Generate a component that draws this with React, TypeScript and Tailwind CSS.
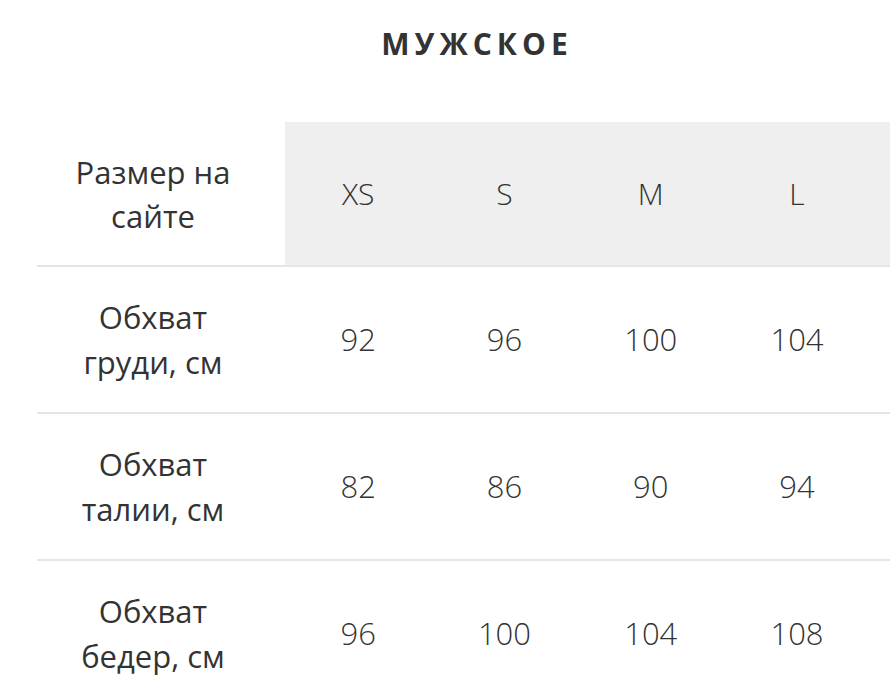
const sizes = ["XS", "S", "M", "L"];

const rows = [
  { label: ["Обхват", "груди, см"], values: ["92", "96", "100", "104"] },
  { label: ["Обхват", "талии, см"], values: ["82", "86", "90", "94"] },
  { label: ["Обхват", "бедер, см"], values: ["96", "100", "104", "108"] },
];

export default function App() {
  return (
    <div className="w-[890px] h-[699px] overflow-hidden bg-white text-[#333] font-['Open_Sans','Noto_Sans',sans-serif]">
      <div className="flex justify-center pl-[64px] pt-[23px] h-[122px]">
        <h1 className="text-[30px] font-bold tracking-[5px] leading-[42px] text-[#333]">МУЖСКОЕ</h1>
      </div>

      {/* Size table */}
      <div className="ml-[37px]">
        <div className="flex h-[145px] border-b-2 border-[#e5e5e5]">
          <div className="w-[248px] pr-4 flex flex-col items-center justify-center text-[31px] leading-[44px] text-center">
            <span>Размер на</span>
            <span>сайте</span>
          </div>
          <div className="flex flex-1 bg-[#efefef]">
            {sizes.map((s) => (
              <div key={s} className="w-[146.3px] flex items-center justify-center text-[30px] font-light">
                {s}
              </div>
            ))}
          </div>
        </div>

        {rows.map((row) => (
          <div key={row.label[1]} className="flex h-[147px] border-b-2 border-[#e5e5e5]">
            <div className="w-[248px] pr-4 flex flex-col items-center justify-center text-[31px] leading-[45px] text-center">
              <span>{row.label[0]}</span>
              <span>{row.label[1]}</span>
            </div>
            {row.values.map((v, i) => (
              <div key={i} className="w-[146.3px] flex items-center justify-center text-[31px] font-light">
                {v}
              </div>
            ))}
          </div>
        ))}
      </div>
    </div>
  );
}
